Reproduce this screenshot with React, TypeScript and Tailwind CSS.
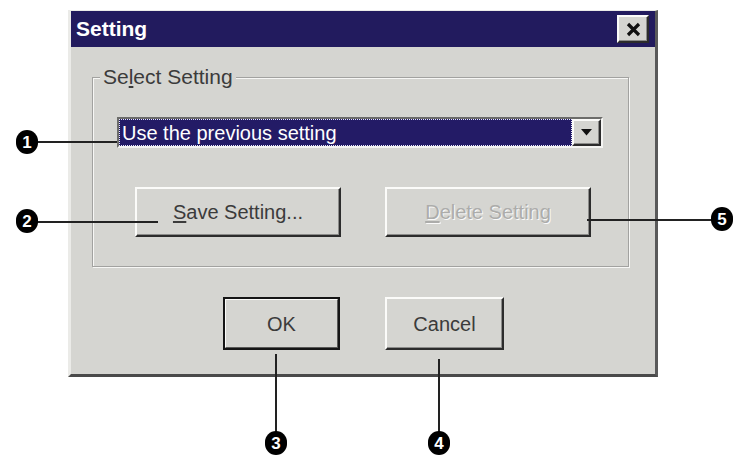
const font = "font-['Liberation_Sans',Arial,sans-serif]";

const Callout = ({ n, className }: { n: string; className: string }) => (
  <div
    className={`absolute flex h-[24px] w-[22px] items-center justify-center rounded-full bg-black text-[17px] font-bold leading-none text-white ${className}`}
  >
    {n}
  </div>
);

const raised =
  'border-2 border-t-[#fbfbf9] border-l-[#fbfbf9] border-r-[#2c2c2c] border-b-[#2c2c2c] shadow-[inset_-1px_-1px_0_#8c8c8a]';

export default function App() {
  return (
    <div className={`relative h-[462px] w-[739px] overflow-hidden bg-white ${font}`}>
      <div className="ml-[68px] mt-[10px] flex h-[367px] w-[590px] flex-col border-x-[3px] border-t border-b-[3px] border-t-[#ebebe8] border-l-[#ebebe8] border-r-[#5a5a5a] border-b-[#4a4a4a] bg-[#d5d5d1]">
        {/* title bar */}
        <div className="flex h-[36px] items-center justify-between bg-[#221b5e] pl-[5px] pr-[6px]">
          <span className="text-[21px] font-bold text-white">Setting</span>
          <button type="button" className={`flex h-[28px] w-[32px] items-center justify-center bg-[#d5d5d1] ${raised}`}>
            <svg width="15" height="15" viewBox="0 0 15 15">
              <path d="M2 2L13 13M13 2L2 13" stroke="#111" strokeWidth="3.2" />
            </svg>
          </button>
        </div>

        {/* group box */}
        <fieldset className="ml-[21px] mt-[19px] h-[201px] w-[537px] border border-[#a2a2a0] shadow-[inset_1px_1px_0_#f7f7f5,1px_1px_0_#f7f7f5]">
          <legend className="ml-[7px] bg-[#d5d5d1] px-[3px] text-[21px] leading-[22px] text-[#3b3b3b]">
            Se<span className="underline underline-offset-2">l</span>ect Setting
          </legend>

          <div className="ml-[24px] mt-[29px] flex h-[31px] w-[486px] border-2 border-t-[#6c6c6a] border-l-[#6c6c6a] border-r-[#f4f4f2] border-b-[#f4f4f2] bg-[#d5d5d1]">
            <div className="flex flex-1 items-center border border-dotted border-[#e8e8ff] bg-[#231b66] pl-[2px] text-[20px] text-white">
              Use the previous setting
            </div>
            <div className={`flex w-[29px] items-center justify-center bg-[#d5d5d1] ${raised}`}>
              <svg width="11" height="7" viewBox="0 0 11 7">
                <path d="M0 0H11L5.5 6.5Z" fill="#111" />
              </svg>
            </div>
          </div>

          <div className="ml-[42px] mt-[39px] flex gap-[44px]">
            <button type="button" className={`flex h-[50px] w-[206px] items-center justify-center bg-[#d5d5d1] text-[20px] text-[#3b3b3b] ${raised}`}>
              <span>
                <span className="underline underline-offset-2">S</span>ave Setting...
              </span>
            </button>
            <button
              type="button"
              disabled
              className={`flex h-[50px] w-[206px] items-center justify-center bg-[#d5d5d1] text-[20px] text-[#acacaa] [text-shadow:1px_1px_0_#fafafa] ${raised}`}
            >
              <span>
                <span className="underline underline-offset-2">D</span>elete Setting
              </span>
            </button>
          </div>
        </fieldset>

        {/* OK / Cancel */}
        <div className="ml-[152px] mt-[30px] flex gap-[45px]">
          <button type="button" className="h-[53px] w-[117px] border-2 border-[#161616] bg-[#d5d5d1]">
            <div className="flex h-full w-full items-center justify-center border border-t-[#fbfbf9] border-l-[#fbfbf9] border-r-[#5a5a58] border-b-[#5a5a58] text-[20px] text-[#3b3b3b]">
              OK
            </div>
          </button>
          <button type="button" className={`flex h-[53px] w-[119px] items-center justify-center bg-[#d5d5d1] text-[20px] text-[#3b3b3b] ${raised}`}>
            Cancel
          </button>
        </div>
      </div>

      {/* callouts */}
      <div className="absolute left-[36px] top-[141px] h-[1.5px] w-[81px] bg-[#222]" />
      <Callout n="1" className="left-[16px] top-[130px]" />

      <div className="absolute left-[36px] top-[221px] h-[1.5px] w-[122px] bg-[#222]" />
      <Callout n="2" className="left-[16px] top-[209px]" />

      <div className="absolute left-[587px] top-[219px] h-[1.5px] w-[126px] bg-[#222]" />
      <Callout n="5" className="left-[711px] top-[207px]" />

      <div className="absolute left-[275px] top-[354px] h-[80px] w-[1.5px] bg-[#222]" />
      <Callout n="3" className="left-[265px] top-[431px]" />

      <div className="absolute left-[438px] top-[359px] h-[75px] w-[1.5px] bg-[#222]" />
      <Callout n="4" className="left-[428px] top-[431px]" />
    </div>
  );
}
